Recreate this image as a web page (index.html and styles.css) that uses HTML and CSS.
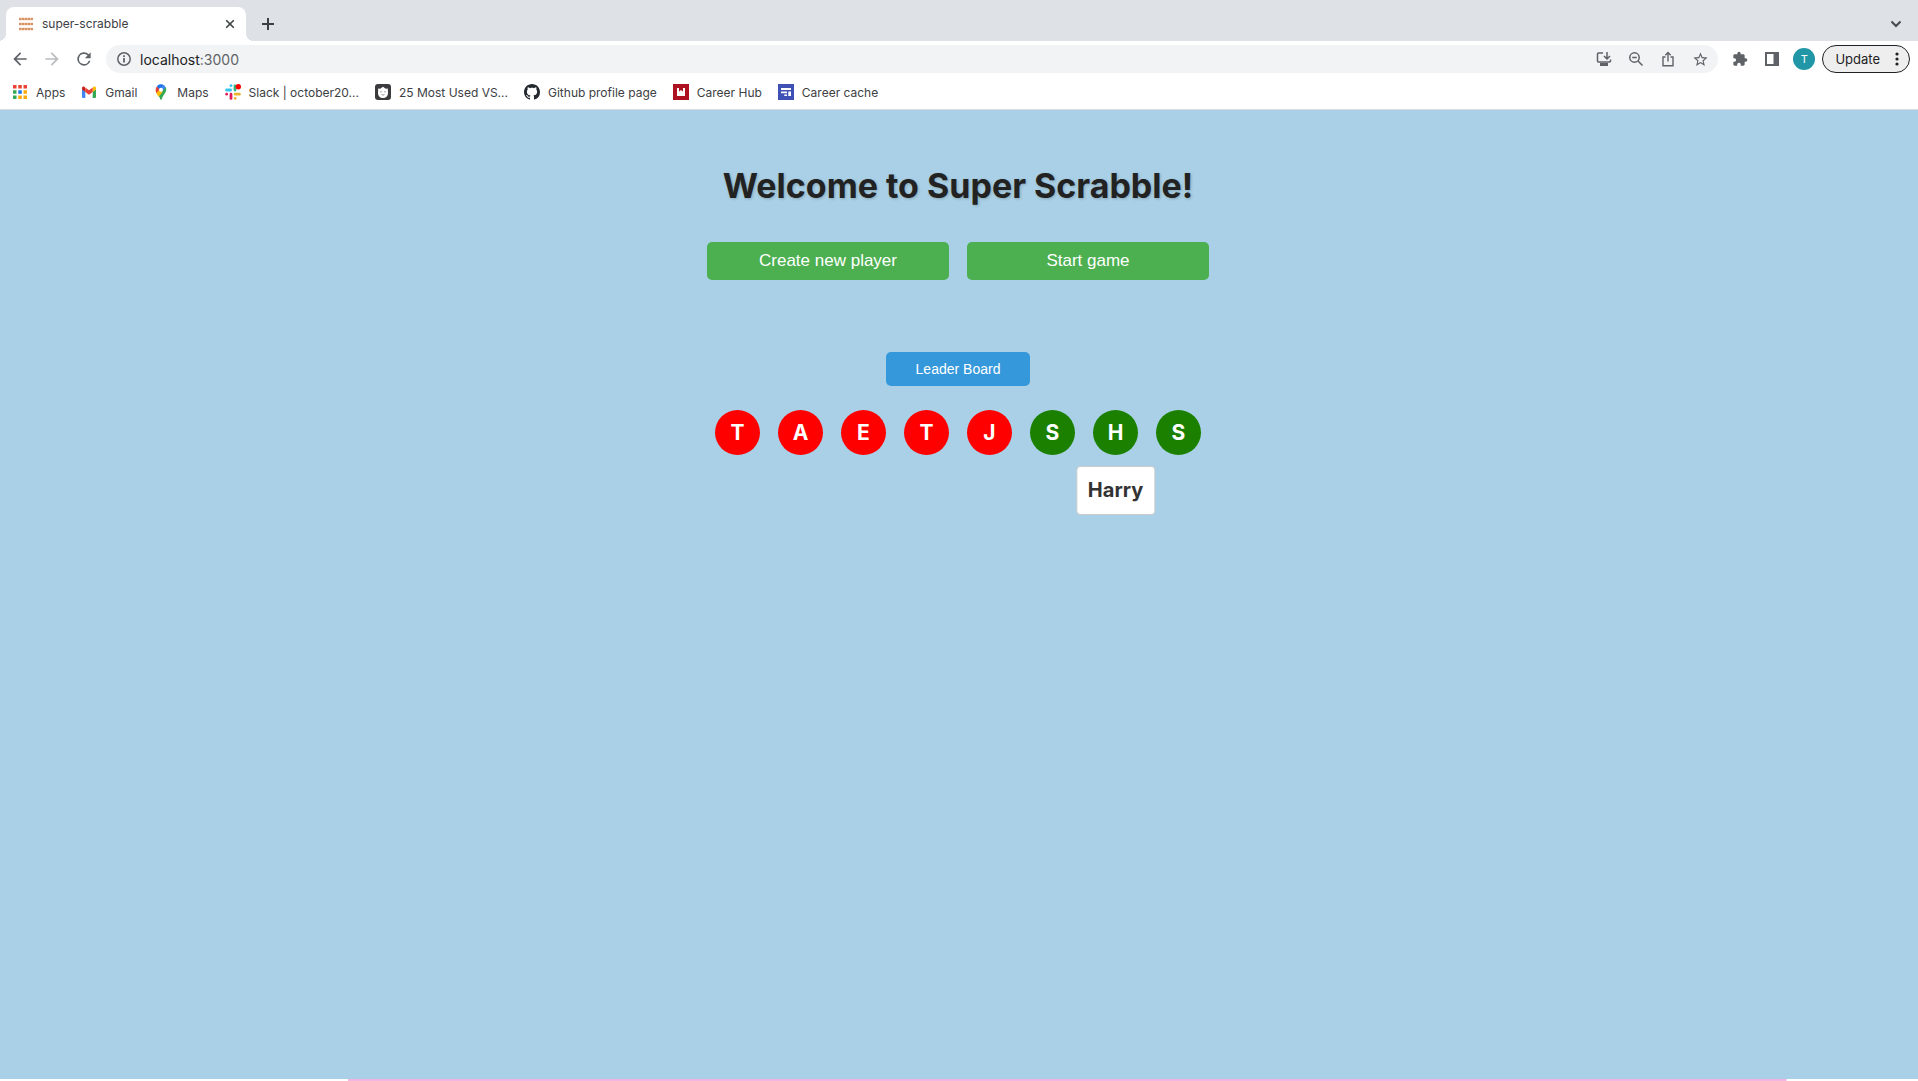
FILE: index.html
```html
<!DOCTYPE html>
<html lang="en">
<head>
<meta charset="utf-8">
<title>super-scrabble</title>
<link rel="stylesheet" href="styles.css">
</head>
<body>
<header class="browser">
  <div class="tabstrip">
    <div class="tab">
      <svg class="favicon" width="16" height="16" viewBox="0 0 16 16"><g stroke="#efb68f" stroke-width="2.400"><path d="M1 3h14M1 8h14M1 13h14"/></g><g stroke="#b8703f" stroke-width="1" stroke-dasharray="2 1"><path d="M1 3h14M1 8h14M1 13h14"/></g></svg>
      <span class="tab-title">super-scrabble</span>
      <button class="icon-button" aria-label="Close tab"><svg width="10" height="10" viewBox="0 0 10 10" fill="none" stroke="#3c4043" stroke-width="1.6"><path d="M1.2 1.2l7.6 7.6M8.8 1.2l-7.6 7.6"/></svg></button>
    </div>
    <button class="icon-button new-tab" aria-label="New tab"><svg width="14" height="14" viewBox="0 0 14 14" stroke="#3c4043" stroke-width="2"><path d="M7 1v12M1 7h12"/></svg></button>
    <button class="icon-button tab-search" aria-label="Search tabs"><svg width="12" height="8" viewBox="0 0 12 8" fill="none" stroke="#46494d" stroke-width="2"><path d="M1.5 1.5L6 6l4.500-4.500"/></svg></button>
  </div>
  <div class="toolbar">
    <nav class="history">
      <button class="icon-button" aria-label="Back"><svg width="20" height="20" viewBox="0 0 24 24" fill="#5f6368"><path d="M20 11H7.830l5.590-5.590L12 4l-8 8 8 8 1.410-1.410L7.830 13H20z"/></svg></button>
      <button class="icon-button" aria-label="Forward"><svg width="20" height="20" viewBox="0 0 24 24" fill="#babcbe"><path d="M12 4l-1.410 1.410L16.170 11H4v2h12.170l-5.580 5.590L12 20l8-8z"/></svg></button>
      <button class="icon-button" aria-label="Reload"><svg width="20" height="20" viewBox="0 0 24 24" fill="#5f6368"><path d="M17.650 6.350A8 8 0 1 0 19.730 14h-2.080A6 6 0 1 1 12 6c1.660 0 3.140.69 4.220 1.780L13 11h7V4z"/></svg></button>
    </nav>
    <div class="omnibox">
      <svg width="16" height="16" viewBox="0 0 16 16" fill="none" stroke="#5f6368" stroke-width="1.500"><circle cx="8" cy="8" r="6.200"/><path d="M8 7v4.500M8 4.300v1.600" stroke-width="1.800"/></svg>
      <span class="url">localhost<span class="port">:3000</span></span>
      <div class="omnibox-actions">
        <button class="icon-button" aria-label="Install"><svg width="16" height="16" viewBox="0 0 16 16" fill="none" stroke="#5f6368" stroke-width="1.500"><path d="M7 2H2.500Q1.500 2 1.500 3v7q0 1 1 1h11q1 0 1-1V8.500M11 1v6.500M8 5l3 3 3-3"/><path d="M4 13.500h8" stroke-width="3"/></svg></button>
        <button class="icon-button" aria-label="Zoom"><svg width="16" height="16" viewBox="0 0 16 16" fill="none" stroke="#5f6368" stroke-width="1.500"><circle cx="6.500" cy="6.500" r="4.700"/><path d="M4.200 6.500h4.600M10 10l4.500 4.500"/></svg></button>
        <button class="icon-button" aria-label="Share"><svg width="16" height="16" viewBox="0 0 16 16" fill="none" stroke="#5f6368" stroke-width="1.400"><path d="M5.500 6H3v8.700h10V6h-2.500M8 10.500V1.800M5.300 4.200L8 1.500l2.700 2.700"/></svg></button>
        <button class="icon-button" aria-label="Bookmark this tab"><svg width="17" height="17" viewBox="0 0 24 24" fill="#5f6368"><path d="M22 9.240l-7.190-.62L12 2 9.190 8.630 2 9.240l5.460 4.730L5.820 21 12 17.270 18.180 21l-1.630-7.030zM12 15.400l-3.760 2.270 1-4.280-3.320-2.880 4.380-.38L12 6.100l1.710 4.040 4.380.38-3.320 2.880 1 4.280z"/></svg></button>
      </div>
    </div>
    <div class="extensions">
      <button class="icon-button" aria-label="Extensions"><svg width="16" height="16" viewBox="0 0 24 24" fill="#5f6368"><path d="M20.500 11H19V7c0-1.100-.9-2-2-2h-4V3.500a2.500 2.500 0 0 0-5 0V5H4c-1.100 0-2 .9-2 2v3.800h1.500a2.700 2.700 0 0 1 0 5.400H2V20c0 1.100.9 2 2 2h3.800v-1.500a2.700 2.700 0 0 1 5.400 0V22H17c1.100 0 2-.9 2-2v-4h1.500a2.500 2.500 0 0 0 0-5z"/></svg></button>
      <button class="icon-button" aria-label="Side panel"><svg width="14" height="14" viewBox="0 0 14 14" fill="none" stroke="#5f6368"><path d="M1 1h12v12H1z" stroke-width="2"/><path d="M11 0v14" stroke-width="5"/></svg></button>
      <button class="avatar" aria-label="Profile">T</button>
    </div>
    <button class="update">Update <svg width="4" height="14" viewBox="0 0 4 14" fill="#202124"><circle cx="2" cy="2" r="1.600"/><circle cx="2" cy="7" r="1.600"/><circle cx="2" cy="12" r="1.600"/></svg></button>
  </div>
  <nav class="bookmarks">
    <a href="#"><svg width="16" height="16" viewBox="0 0 16 16"><path fill="#ea4335" d="M1 1h3.500v3.500H1zM6.300 1h3.500v3.500H6.300zM11.500 1H15v3.500h-3.500z"/><path fill="#34a853" d="M1 6.300h3.500v3.500H1zM1 11.500h3.500V15H1z"/><path fill="#1a73e8" d="M6.300 6.300h3.500v3.500H6.300z"/><path fill="#fbab04" d="M11.500 6.300H15v3.500h-3.500zM6.300 11.500h3.500V15H6.300zM11.500 11.500H15V15h-3.500z"/></svg>Apps</a>
    <a href="#"><svg width="16" height="16" viewBox="0 0 16 16"><path fill="#4285f4" d="M1 5v8q0 1 1 1h2.300V7.500z"/><path fill="#34a853" d="M15 5v8q0 1-1 1h-2.300V7.500z"/><path fill="#fbbc04" d="M11.700 4v4L15 5.500V4.200c0-1.700-1.600-2.100-2.600-1.300z"/><path fill="#c5221f" d="M1 5.500L4.300 8V4l-.7-1.100C2.600 2.100 1 2.500 1 4.200z"/><path fill="#ea4335" d="M4.300 8V3.400L8 6.200l3.700-2.800V8L8 10.800z"/></svg>Gmail</a>
    <a href="#"><svg width="16" height="16" viewBox="0 0 16 16"><path fill="#34a853" d="M3.200 8.600L12.700 3c1.400 3.400-.2 5.700-1.800 7.700-1.400 1.900-1.700 3-2 4.400-.2 1-1.500 1-1.800 0-.5-2.700-2-3.700-3.900-6.500z"/><path fill="#fbbc04" d="M3.200 8.600L6.300 5l3.500 2.700-4.200 5c-.8-1.300-1.700-2.400-2.400-4.100z"/><path fill="#ea4335" d="M3.900 2.200L7 5.300 3.200 9C2.200 6.700 2.500 4 3.900 2.200z"/><path fill="#1a73e8" d="M3.900 2.200C6 0 9-.1 11 1.200L6.600 5.800z"/><path fill="#4285f4" d="M10.500 1q1.500.7 2.200 2.200L9.200 7.600 6.800 5.300z"/><circle cx="8" cy="5.700" r="2" fill="#fff"/></svg>Maps</a>
    <a href="#"><svg width="16" height="16" viewBox="0 0 16 16" fill="none" stroke-width="2.800" stroke-linecap="round"><path stroke="#36c5f0" d="M1.600 6h4M6 1.600v.1"/><path stroke="#2eb67d" d="M10 1.800V6"/><path stroke="#ecb22e" d="M10.200 10.200h4.200M10.200 14.400v-.1"/><path stroke="#e01e5a" d="M6 10.200v4.200M1.600 10.200h.1"/><circle cx="13.300" cy="2.700" r="2.700" fill="#f00" stroke="none"/></svg>Slack | october20...</a>
    <a href="#"><svg width="16" height="16" viewBox="0 0 16 16"><rect width="16" height="16" rx="3" fill="#3b3b3d"/><path fill="#fff" d="M3.200 4.500l2 .3L8 2.800l2.800 2 2-.3.200 4.500c0 3-2.200 5-5 5s-5-2-5-5z"/><path d="M5.200 7.800h1.600M9.200 7.800h1.600M6.500 10.500q1.500 1.200 3 0" fill="none" stroke="#777" stroke-width=".8"/></svg>25 Most Used VS...</a>
    <a href="#"><svg width="16" height="16" viewBox="0 0 16 16" fill="#24292f"><path d="M8 0C3.580 0 0 3.580 0 8c0 3.540 2.290 6.530 5.470 7.590.4.070.55-.17.55-.38 0-.19-.01-.82-.01-1.490-2.010.37-2.530-.49-2.690-.94-.09-.23-.48-.94-.82-1.130-.28-.15-.68-.52-.01-.53.63-.01 1.080.58 1.230.82.72 1.210 1.870.87 2.330.66.07-.52.28-.87.51-1.070-1.780-.2-3.640-.89-3.640-3.950 0-.87.31-1.590.82-2.150-.08-.2-.36-1.020.08-2.120 0 0 .67-.21 2.200.82.64-.18 1.320-.27 2-.27s1.360.09 2 .27c1.530-1.040 2.200-.82 2.200-.82.44 1.100.16 1.920.08 2.120.51.56.82 1.270.82 2.150 0 3.070-1.870 3.750-3.650 3.950.29.25.54.73.54 1.480 0 1.070-.01 1.930-.01 2.200 0 .21.15.46.55.38A8.010 8.010 0 0 0 16 8c0-4.420-3.580-8-8-8z"/></svg>Github profile page</a>
    <a href="#"><svg width="16" height="16" viewBox="0 0 16 16"><path fill="#ad1220" d="M0 0h16v16H0z"/><path fill="#fff" d="M4 4h2v3.500l2-1.500 2 1.500V4h2v8H4z"/></svg>Career Hub</a>
    <a href="#"><svg width="16" height="16" viewBox="0 0 16 16"><path fill="#3f51b5" d="M0 0h16v16H0z"/><path fill="#fff" d="M3 4h10v2H3zM3 7.500h6v1.700H3zM10.300 7.500H13V12h-2.700zM6.300 10.500H9V12H6.300z"/></svg>Career cache</a>
  </nav>
</header>
<main class="page">
  <h1>Welcome to Super Scrabble!</h1>
  <div class="actions">
    <button class="action">Create new player</button>
    <button class="action">Start game</button>
  </div>
  <button class="leaderboard">Leader Board</button>
  <ul class="players">
    <li class="player">T</li>
    <li class="player">A</li>
    <li class="player">E</li>
    <li class="player">T</li>
    <li class="player">J</li>
    <li class="player online">S</li>
    <li class="player online">H<span class="tooltip" role="tooltip">Harry</span></li>
    <li class="player online">S</li>
  </ul>
</main>
<footer class="edge"></footer>
</body>
</html>
```
FILE: styles.css
```css
* { box-sizing: border-box; }
body {
  margin: 0;
  min-height: 100vh;
  display: flex;
  flex-direction: column;
  background: #fff;
  color: #202124;
  font-family: Inter, "Liberation Sans", sans-serif;
}
button { font: inherit; border: 0; margin: 0; cursor: pointer; }
svg { display: block; flex: none; }
.icon-button {
  display: flex;
  align-items: center;
  justify-content: center;
  padding: 0;
  background: none;
}

.browser { border-bottom: 1px solid #d9dce0; }
.tabstrip {
  display: flex;
  align-items: center;
  height: 41px;
  padding: 7px 16px 0 6px;
  background: #dee1e6;
}
.tab {
  position: relative;
  display: flex;
  align-items: center;
  align-self: stretch;
  width: 240px;
  padding: 0 11px 0 12px;
  gap: 8px;
  background: #fff;
  border-radius: 8px 8px 0 0;
}
.tab::before, .tab::after {
  content: "";
  position: absolute;
  bottom: 0;
  width: 8px;
  height: 8px;
}
.tab::before { right: 100%; background: radial-gradient(circle at 0 0, transparent 8px, #fff 8px); }
.tab::after { left: 100%; background: radial-gradient(circle at 100% 0, transparent 8px, #fff 8px); }
.tab-title { flex: 1; padding-bottom: 2px; font-size: 12px; color: #3c4043; }
.new-tab { margin-left: 15px; }
.tab-search { margin-left: auto; }

.toolbar {
  display: flex;
  align-items: center;
  height: 36px;
  padding: 0 8px 0 10px;
}
.history { display: flex; gap: 12px; margin-right: 12px; }
.omnibox {
  flex: 1;
  display: flex;
  align-items: center;
  height: 28px;
  padding: 0 7px 0 10px;
  gap: 8px;
  background: #f1f3f4;
  border-radius: 14px;
}
.url { flex: 1; font-size: 14px; }
.port { color: #5f6368; }
.omnibox-actions, .extensions { display: flex; align-items: center; gap: 10px; }
.omnibox-actions .icon-button, .extensions .icon-button { width: 22px; height: 22px; }
.extensions { margin: 0 7px 0 11px; }
.avatar {
  width: 22px;
  height: 22px;
  padding: 0;
  border-radius: 50%;
  background: #2196a6;
  color: #fff;
  font-size: 11px;
}
.update {
  display: flex;
  align-items: center;
  gap: 15px;
  height: 28px;
  padding: 0 10px 0 12px;
  border: 1px solid #202124;
  border-radius: 14px;
  background: #eee;
  color: #202124;
  font-size: 13px;
}
.bookmarks {
  display: flex;
  align-items: center;
  gap: 16px;
  height: 32px;
  padding: 0 12px 2px;
  font-size: 12px;
}
.bookmarks a {
  display: flex;
  align-items: center;
  gap: 8px;
  color: #3c4043;
  text-decoration: none;
}

.page {
  flex: 1;
  display: flex;
  flex-direction: column;
  align-items: center;
  padding: 54px 2px 0 0;
  background: #a9d0e6;
}
h1 {
  margin: 0 0 34px;
  font-size: 34px;
  line-height: 44px;
  font-weight: 700;
  color: #222;
  text-shadow: 1px 1px 3px rgba(0, 0, 0, 0.2);
}
.actions { display: flex; gap: 18px; margin-bottom: 72px; }
.action, .leaderboard {
  border-radius: 5px;
  color: #fff;
  font-family: "Liberation Sans", Arial, sans-serif;
}
.action { width: 242px; height: 38px; background: #4caf50; font-size: 17px; }
.leaderboard { width: 144px; height: 34px; background: #3498db; font-size: 14px; }
.players {
  display: flex;
  gap: 18px;
  margin: 24px 0 0;
  padding: 0;
  list-style: none;
}
.player {
  position: relative;
  display: flex;
  align-items: center;
  justify-content: center;
  width: 45px;
  height: 45px;
  border-radius: 50%;
  background: #f00;
  color: #fff;
  font-size: 21px;
  font-weight: 700;
}
.player.online { background: #1b8000; }
.tooltip {
  position: absolute;
  top: 56px;
  left: 50%;
  transform: translateX(-50%);
  padding: 10px 11px;
  border: 1px solid #ccc;
  border-radius: 4px;
  background: #fff;
  color: #333;
  font-size: 20px;
  line-height: 27px;
}
.edge {
  height: 2px;
  background: linear-gradient(#f3aee0, #f3b8e2) 348px 0 / 75% 2px no-repeat #fff;
}
```
